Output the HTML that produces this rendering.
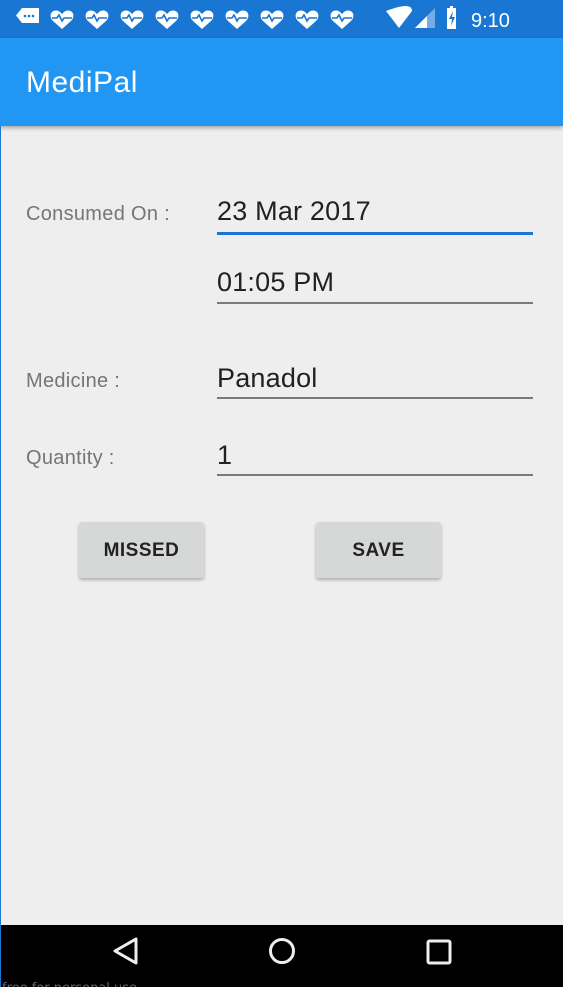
<!DOCTYPE html>
<html><head><style>
*{margin:0;padding:0;box-sizing:border-box}
body{width:563px;height:987px;overflow:hidden;background:#eeeeee;font-family:"Liberation Sans",sans-serif;position:relative}
.abs{position:absolute}
.lbl{position:absolute;left:26px;font-size:20px;color:#757575;line-height:1;letter-spacing:.3px}
.val{position:absolute;left:217px;font-size:27px;color:#212121;line-height:1;letter-spacing:.2px}
.ln{position:absolute;left:217px;width:316px;height:2px;background:#7a7a7a}
.btn{position:absolute;top:522px;width:125px;height:56px;background:#d6d7d7;border-radius:3px;box-shadow:0 2px 3px rgba(0,0,0,.28);font-size:19px;font-weight:bold;color:#222;text-align:center;line-height:57px;letter-spacing:.5px}
</style></head><body>
<div class="abs" style="left:0;top:0;width:563px;height:38px;background:#1976d2"></div>
<svg class="abs" style="left:0;top:0" width="563" height="38">
<g fill="#fff">
<path d="M22 8h17v15H22l-6-7.5z"/>
<circle cx="25" cy="16" r="1.3" fill="#1976d2"/><circle cx="29" cy="16" r="1.3" fill="#1976d2"/><circle cx="33" cy="16" r="1.3" fill="#1976d2"/>
</g>
<g id="h" fill="#fff">
<path d="M62 29l-9-8c-3-3-3-7-1-9 2-2 6-2 8 0l2 2 2-2c2-2 6-2 8 0 2 2 2 6-1 9z"/>
<path d="M52 18h5l2-3 3 6 2-3h8" stroke="#1976d2" stroke-width="1.6" fill="none"/>
</g>
<use href="#h" x="35"/><use href="#h" x="70"/><use href="#h" x="105"/><use href="#h" x="140"/><use href="#h" x="175"/><use href="#h" x="210"/><use href="#h" x="245"/><use href="#h" x="280"/>
<path d="M386 11q26-10 26 0l-13 17z" fill="#fff"/>
<path d="M415 28L435 8v20z" fill="#fff" opacity=".4"/><path d="M415 28l12-12v12z" fill="#fff"/>
<path d="M447 8h3V6h3v2h3v21h-9z" fill="#fff"/><path d="M453 11l-4 8h3l-1 7 4-9h-3z" fill="#1976d2"/>
<text x="471" y="27" fill="#fff" font-size="20" font-family="Liberation Sans">9:10</text>
</svg>
<div class="abs" style="left:0;top:38px;width:563px;height:88px;background:#2196f3;box-shadow:0 2px 4px rgba(0,0,0,.3)"></div>
<div class="abs" style="left:26px;top:66px;font-size:30px;color:#fff;letter-spacing:.5px">MediPal</div>
<div class="abs" style="left:0;top:126px;width:1px;height:861px;background:#1976d2"></div>
<div class="lbl" style="top:204px">Consumed On :</div>
<div class="val" style="top:198px">23 Mar 2017</div>
<div class="ln" style="top:232px;background:#1976d2;height:3px"></div>
<div class="val" style="top:269px">01:05 PM</div>
<div class="ln" style="top:302px"></div>
<div class="lbl" style="top:371px">Medicine :</div>
<div class="val" style="top:365px">Panadol</div>
<div class="ln" style="top:397px"></div>
<div class="lbl" style="top:448px">Quantity :</div>
<div class="val" style="top:442px">1</div>
<div class="ln" style="top:474px"></div>
<div class="btn" style="left:79px">MISSED</div>
<div class="btn" style="left:316px">SAVE</div>
<div class="abs" style="left:1px;top:925px;width:562px;height:62px;background:#000"></div>
<svg class="abs" style="left:0;top:925px" width="563" height="62">
<path d="M136 14v24l-21-12z" fill="none" stroke="#eee" stroke-width="3" stroke-linejoin="round"/>
<circle cx="282" cy="26" r="11.5" fill="none" stroke="#eee" stroke-width="3"/>
<rect x="428" y="16" width="22" height="22" rx="1.5" fill="none" stroke="#eee" stroke-width="3"/>
<text x="2" y="67" fill="#666" font-size="13" font-family="DejaVu Sans">free for personal use</text>
</svg>
</body></html>
